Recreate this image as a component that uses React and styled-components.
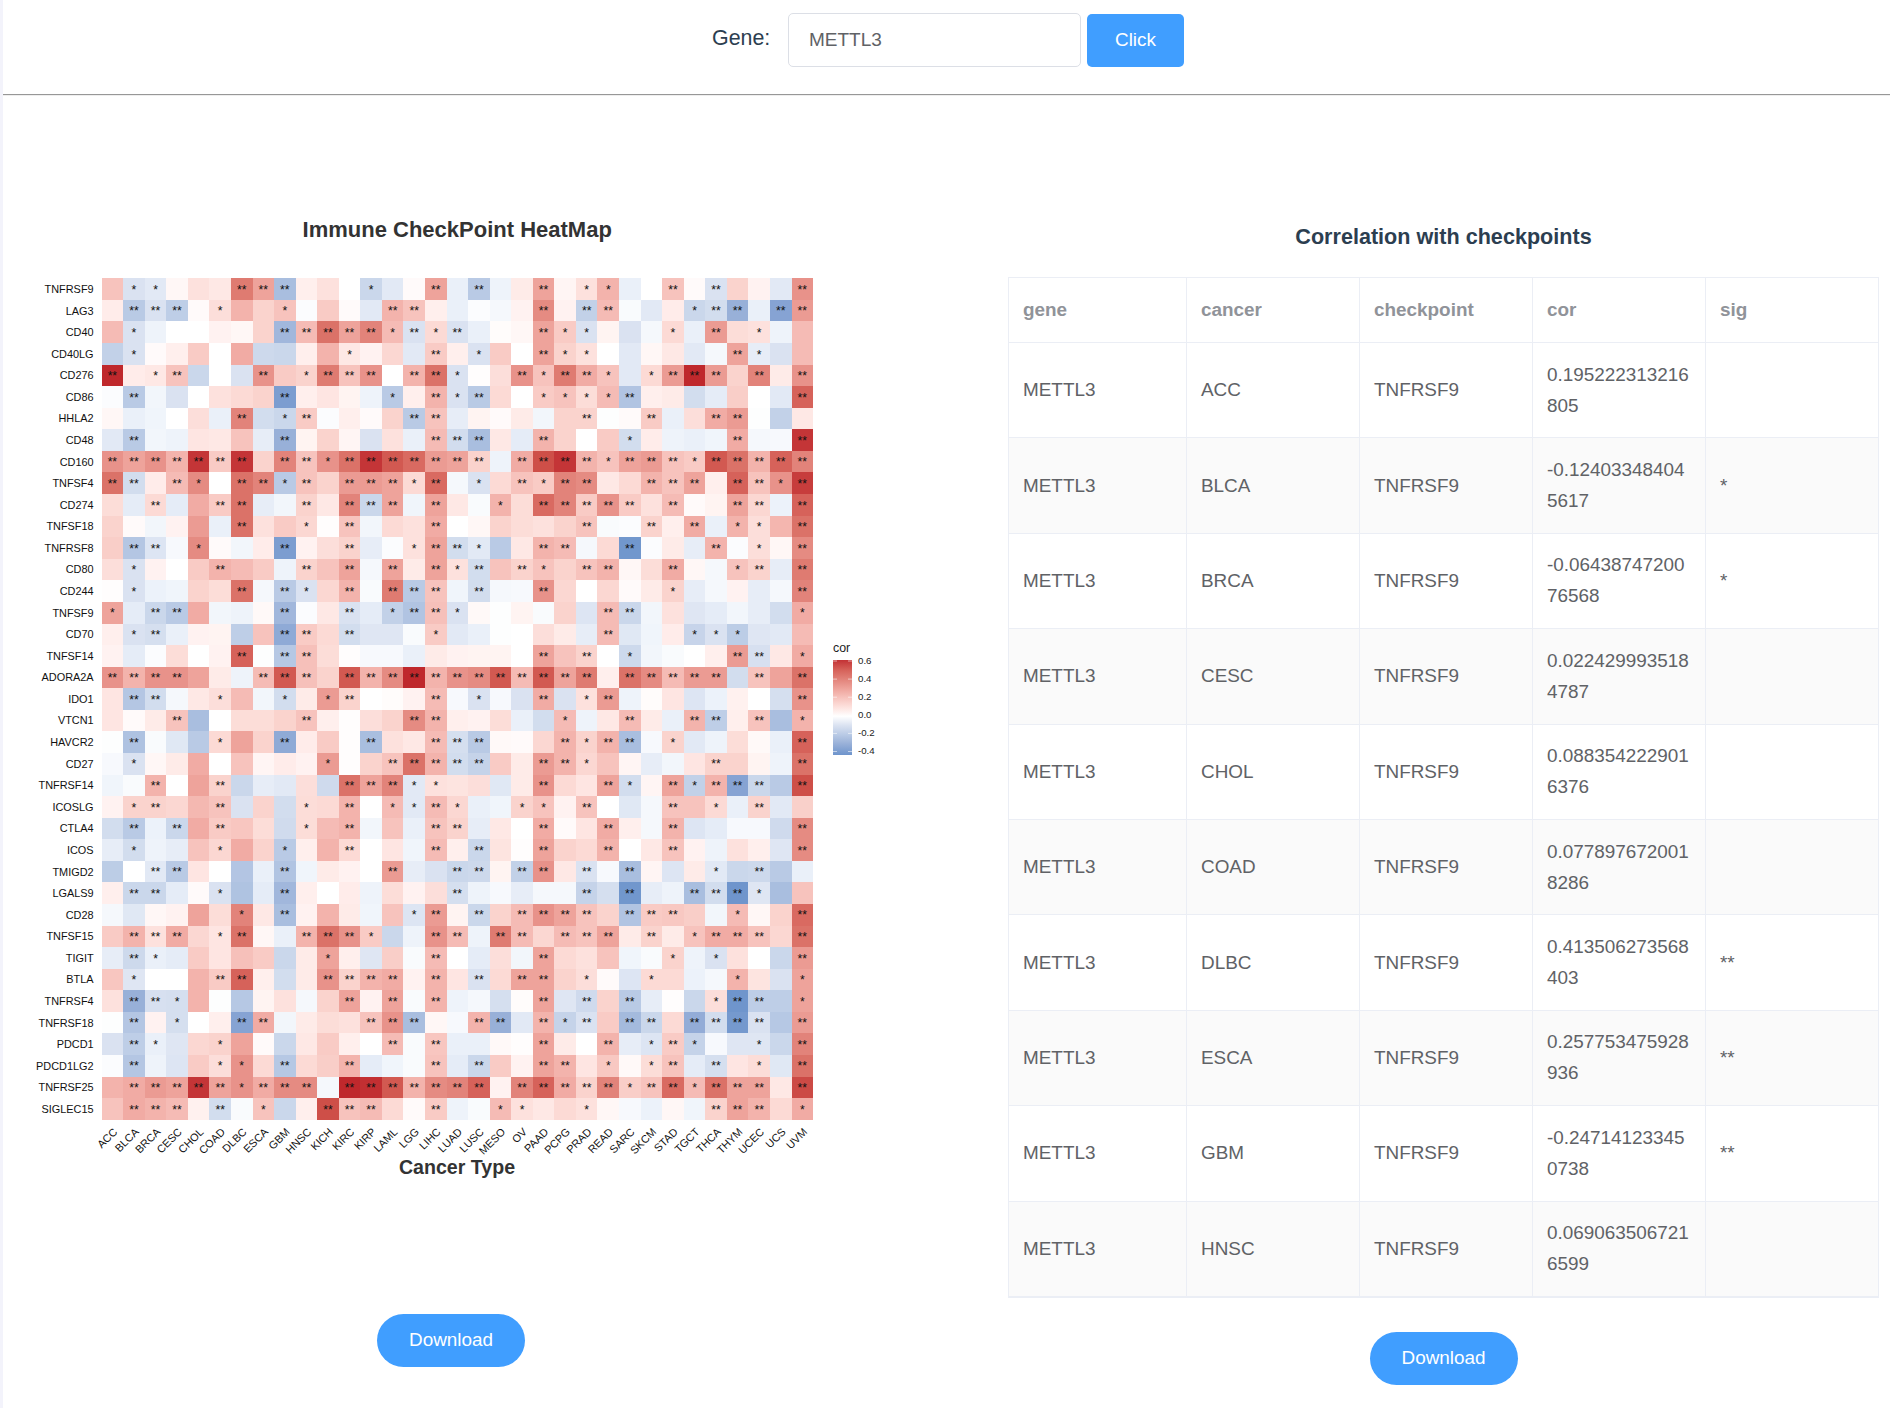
import React from "react";
import styled, { createGlobalStyle } from "styled-components";

const GlobalStyle = createGlobalStyle`
  * { box-sizing: border-box; }
  body {
    margin: 0;
    background: #fff;
    font-family: "Liberation Sans", Arial, Helvetica, sans-serif;
    color: #2c3e50;
    overflow: hidden;
  }
`;

const Page = styled.div`
  height: 1408px;
  border-left: 3px solid #f3f3fb;
  overflow: hidden;
`;

const Toolbar = styled.form`
  display: flex;
  align-items: flex-start;
  height: 95px;
  padding: 13px 0 0 709px;
  border-bottom: 1px solid #979797;
  box-shadow: 0 1px 0 #eee;
`;

const FieldLabel = styled.label`
  width: 76px;
  font-size: 21.4px;
  line-height: 51px;
`;

const GeneInput = styled.input`
  width: 293px;
  height: 54px;
  padding: 0 20px 1px;
  border: 1px solid #dcdfe6;
  border-radius: 5px;
  outline: none;
  font: 19px "Liberation Sans", Arial, sans-serif;
  color: #606266;
`;

const Button = styled.button`
  width: ${(p) => (p.$round ? "148px" : "97px")};
  height: 53px;
  margin: ${(p) => p.$margin};
  padding: 0 0 2px;
  border: 0;
  border-radius: ${(p) => (p.$round ? "27px" : "5px")};
  background: #409eff;
  color: #fff;
  font: 18.9px "Liberation Sans", Arial, sans-serif;
`;

const Content = styled.main`
  display: grid;
  grid-template-columns: 1005px 871px;
`;

const PlotPanel = styled.section`
  display: flex;
  flex-direction: column;
  align-items: flex-start;
  padding-top: 105px;
`;

const TablePanel = styled.section`
  display: flex;
  flex-direction: column;
  align-items: center;
  padding-top: 122px;
`;

const TableTitle = styled.h3`
  margin: 0;
  height: 60px;
  font-size: 21.6px;
  line-height: 40px;
`;

const Table = styled.table`
  width: 871px;
  height: 1021px;
  table-layout: fixed;
  border-collapse: separate;
  border-spacing: 0;
  border: 1px solid #ebeef5;
  border-right: 0;
  font-size: 18.9px;
  line-height: 31px;
  color: #606266;
`;

const HeadCell = styled.th`
  height: 65px;
  padding: 0 13px 2px 14px;
  border: solid #ebeef5;
  border-width: 0 1px 1px 0;
  text-align: left;
  color: #909399;
`;

const Row = styled.tr`
  background: ${(p) => (p.$striped ? "#fafafa" : "#fff")};
`;

const Cell = styled.td`
  height: 95.4px;
  padding: 0 13px 1px 14px;
  border: solid #ebeef5;
  border-width: 0 1px 1px 0;
  word-break: break-all;
`;

const Plot = styled.svg`
  display: block;
  font-family: "Liberation Sans", Arial, sans-serif;
`;

const AxisText = styled.text`
  font-size: 10.9px;
  fill: #111;
  text-anchor: end;
`;

const SigText = styled.text`
  font-size: 12.2px;
  fill: #111;
  text-anchor: middle;
`;

const PlotTitle = styled.text`
  font-size: ${(p) => p.$size}px;
  font-weight: bold;
  fill: #333;
  text-anchor: middle;
`;

const LegendText = styled.text`
  font-size: ${(p) => p.$size}px;
  fill: #222;
`;

const cancers =
  "ACC BLCA BRCA CESC CHOL COAD DLBC ESCA GBM HNSC KICH KIRC KIRP LAML LGG LIHC LUAD LUSC MESO OV PAAD PCPG PRAD READ SARC SKCM STAD TGCT THCA THYM UCEC UCS UVM".split(" ");

// One line per checkpoint; values are correlations in steps of 0.05, with their significance stars.
const heat = `
TNFRSF9 4 -2* -1.5* .5 2 1.5 8.5** 6** -5** 1 2 0 -3* -1.5 .3 6** -1 -4** -.8 1.3 6** .6 2* 5* -1 0 4** .3 -2** 3 .8 -1.5 7**
LAG3 1.2 -4** -2** -3.7** .3 2.2* 5 3 4* -.2 3.5 .3 -1.5 5** 4** 1 -1 -.2 -.5 .8 7.5** .8 -3.5** 4.5** -.3 -1.5 1.2 -3* -2.5** -6** -1 -7** 6.5**
CD40 4.5 -2* -.8 0 0 .8 .5 3 -5.5** 4.5** 9** 6** 8** 4.5* -2** 2.5* -2** -1 .2 .5 6** 3.5* -2* .7 -2 -.5 2.5* -1 6.5** 2.3 2* -.8 4.5
CD40LG -3.5 -2* .3 1 3.5 0 5.5 -2.8 -3 1 5 1.5* .8 2.7 -1.5 3.5** 1 -2* 3.5 0 6** 3* 2* 0 -1.5 .5 1.5 -1.5 -.5 6** -1.2* -2 4.5
CD276 13** 1.2 1.5* 4** -3 0 -2 7** 3.5 3* 8.5** 4** 7** 0 5** 9** -2* .1 2.2 7** 4* 8.5** 5.5** 4* -1.5 2.5* 6.5** 13** 6.5** 3 8** 1.3 7**
CD86 -.2 -4** -.6 -2 0 2 2.5 3 -7.5** 1 1.7 .7 -.8 -4* 1 5** -2* -4** 2.5 0 3.5* 4* 2.3* 4.5* -4.5** 1 1.3 -2.5 -1.3 3.3 0 -1.5 10**
HHLA2 .5 -1 -.7 0 2.2 -1 8** -2.5 -3* 3.5** -.2 1 .3 3 -4** 4** -1.2 .7 .3 1.3 -.6 3 3** -.1 .3 3.5** -1 2.2 5.5** 6.5** -.1 -3.5 1.5
CD48 -1.5 -4** -.6 -.8 1.7 1.5 4 -1.2 -6** .7 3 .6 -2 2 -1 4.5** -2.5** -5** 1.5 -1.3 5** 3 0 3.5 -2.5* 1.2 -.8 -1 -.7 5.5** -.5 -.4 12**
CD160 7** 6** 7** 5** 12** 3.5** 12** 3 8** 4** 7* 9** 12** 10.5** 9.5** 6.5** 6** 3** -.8 5.5** 11** 12** 5** 4* 6** 6.5** 4** 3.5* 10.5** 9** 5** 10** 8**
TNFSF4 9** -2.5** 1.2 4.5** 7.5* 0 9** 8** -4* 4** 3 6.5** 6.5** 6** 2.5* 9.5** -.5 -2* 2.5 4** 3.5* 8** 7.5** 1.5 2.5 5** 4** 6** 1 10** 4** 7* 11.7**
CD274 2.3 -1.3 2.5** -1.3 5.5 3.5** 9** -1.2 -.6 3** 1.5 8** -3** 6** -.7 6** 1.5 -.3 5* 2.3 9.5** 8** 3.5** 7** 3.5** 2 4.5** .3 .7 6** 2.7** -.9 10**
TNFSF18 3 .3 -.6 .8 6.5 -1 9** 2 3.5 2.7* .1 4** -.6 2.5 2 5.5** 0 .5 3 2.3 2 3 4** -.3 -.2 3** 1 5.5** -1 5* 2.2* 4.8 9**
TNFRSF8 3.3 -4.3** -1.8** -.4 7.5* .3 -.6 1.2 -7.5** .8 2.2 3** -1.2 -.2 2* 6** -2.5** -1.5* -4 1.5 5** 4.5** -.5 2.5 -8** -.2 1.3 -1.2 5** -.2 2.2* .5 7.5**
CD80 2.2 -2* .8 0 3.5 5** 4.5 3.5 -.8 3** 4 6** -.5 6** 1.3 6** 2* -2.5** 4 3** 4* 3 4** 5** .5 2.3 5.5** .5 -.5 4* 3** -1.2 8.5**
CD244 .1 -2* -.9 -.7 3 2.3 9** -.5 -4** -2* 2.7 5** -.3 8.5** -4** 4** -.7 -2.5** -.5 -.4 7** 2.7 0 2.7 .3 1.3 3* -1.2 -.5 .8 -1.2 -.5 8**
TNFSF9 6* -1.3 -3** -4** 5.5 -.6 -.8 .4 -5.5** -.2 1.5 -2** -1.3 -3.5* -4.5** 4.2** -2* .4 -.1 .7 -.3 3 -1.8 4.5** -3** -.6 2 -1.7 -1.3 -.6 -1.2 -2.5 5.5*
CD70 1 -2* -2.3** -1 .8 .7 -3.7 4 -6.5** 3.5** 2.5 -2.5** -1.7 -1.7 -.3 3.5* -1.5 -1 -.1 0 2.2 1.3 -1.2 4.5** -1.6 -.7 1.2 -3.2* -2* -3.8* -1.7 -1.5 4.5
TNFSF14 .8 -1.3 -.2 2.3 0 .8 10** -.1 -4.2** 4.2** 2.3 .1 -.4 -.4 -1 1.3 .8 .7 .7 0 6** 4 3** 0 -2.8* -.6 -.3 0 1 6.5** -2.2** 1.5 5.5*
ADORA2A 7** 5** 7** 7** 6 1.3 -.8 4.5** 10.5** 4.2** 3 10.5** 5** 7.5** 13** 5** 7** 7.5** 10.5** 4.5** 10.5** 6** 8.5** 1 9** 7.5** 4.5** 6.5** 6.5** -2.5 4** 6 9**
IDO1 1.7 -4.3** -2.5** -.5 1.5 2.2* 4.5 -.6 -2.5* 1.3 6.5* 3** 0 .2 .8 4.5** -.4 -2* -.4 -2 5.5** -2 2* 6.5** -.8 .2 1.7 -1.8 -.9 .9 0 -2.3 7**
VTCN1 1.7 .3 1.3 4** -5 0 2.3 2.3 3 4** 1 .1 2.2 3 7.5** 5** 1 .8 2.3 -1 -2.5 4.5* -.8 1.5 4.5** 1.3 -1 5** -3.7** 1 4** -5 5*
HAVCR2 -.1 -4.7** -.3 -1.6 -4 2.5* 6 3 -6.5** 1.2 3.5 .1 -5** 2 1.5 4.5** -2.3** -4** .4 .3 2.7 5** 3* 5** -5** -.4 3* -1.5 -.8 2.3 .4 -1 10**
CD27 -.4 -2* .5 1.3 5.5 0 4 .6 1.2 .8 6.5* .1 3 4** 9** 5** -2.5** -3.3** 3.5 1.3 6.5** 5** 2.7* 4 .6 -1.2 -.6 1.7 3** 3 .7 -.8 9**
TNFRSF14 -.7 -.3 5** 0 6 3** -3 -1.2 -1.5 2.2 -2.7 9** 6** 8** -1.5* 2* 1.8 2.2 -1.6 1.3 7** 2.5 1.7 6** -2.5* .6 6** -3.5* 5** -7** -3** -4 11**
ICOSLG .8 3* 3** 2.7 4.7 4** -2 3 -2.5 2.3* 2.5 5** 0 4.5* -1.5* 4.5** 2.7* -1 -.7 3* 4* .8 4** 0 -1.6 -.5 4** 4 2.5* -1 3** -1.5 3.2
CTLA4 -2.5 -4** -.9 -3** 5.5 3.5** 3.8 2.3 -2.6 2.3* 4.5 5** -.6 4 -1 4** 3** -1.2 1.5 0 5.5** .3 1.7 5.5** 1 -.5 5** -1.8 -1.3 -.4 -.4 -2.7 7.5**
ICOS -1.2 -2.5* -.8 -1.2 4 2.7* 5.5 3 -4* 1 5 2.5** 0 1.7 -.7 4.5** 1 -3** 1.8 .1 6** 3 2.5 5** 0 1.5 4** .8 -.8 2 1 -1.7 7.5**
TMIGD2 -3.8 0 -1.5** -4** 1.7 0 -4.4 -1 -4.5** -.7 1.3 .8 0 6.5** -1.2 -2 -3** -2.8** .7 -3.5** 7** 1.5 -2** -.4 -5** .6 -1.8 1.3 -1.5* -3 -2.8** -4 -1
LGALS9 1 -3** -3** -1.3 .3 -2* -4.6 -1.3 -5.5** 1 0 1.2 -.8 2.3 .8 2.2 -2.3** -.8 -.4 -1.2 -.5 -.5 -3.3** -2.3 -8** -1.2 -.8 -5** -2.5** -8.3** -1.7* -5 4
CD28 -.5 -1.6 .5 .8 6 2.3 8* 1.5 -5** .8 5 1.3 -.7 4 -1.8* 6.5** .7 -3** 3 4.5** 7** 6** 4** 3 -4.5** 3.5** 3.7** 3.3 -.6 4.5* .5 3 9.5**
TNFSF15 3.5 5** 2** 5.5** 2.7 1.7* 9** .5 -1 5** 9** 7** 3.5* -3 -.8 7** 4.5** -.8 8.5** 4.5** 2.7 4.5** 4** 6** 1.3 3** 1.3 4* 5.5** 5.5** 4** 2.7 9**
TIGIT -1.2 -2.8** -1* -1.3 3.5 1.7 4.2 3.5 -3 1.3 6* 1 -1.7 3.3 -.3 4.5** 0 -1.3 2.2 -.6 6** 2.5 2 4 -.7 -.3 3* -.8 -2* 2 0 -3 6.5**
BTLA 3.8 -1.7* 0 0 5 3.5** 10** 1 -2.5 1.3 7** 3** 5** 5.5** .8 5** 1.7 -2** 2.5 6** 6** 3 2.2* .3 -1.8 2.5* 2.5 -.9 -.5 5* 1.8 -2 6*
TNFRSF4 2 -6** -2.2** -2.3* 5 -.1 -4.2 .7 2 -.5 3 6** .8 6** -.3 5** -.8 -.5 -2.3 .2 6** -1.7 -2.7** 3 -4** -1.2 .1 -3 2.2* -8.3** -3.7** -3.7 6*
TNFRSF18 -.1 -4.3** .8 -2.3* 0 1 -7** 5.5** -.6 1.3 2.3 2 4** 7** -5** .5 -.4 5** -6** -1.5 5** -3.3* -2** 3.5 -5.3** -3** 2.5 -6.3** -2.5** -7.8** -2** -4.2 6.5**
PDCD1 -2 -3.7** -1* -1.7 2.7 3* 6 .3 -3 1.5 3.5 1 0 4.5** -.3 3.8** -1 -1 .4 .1 6** 1.3 0 5** -1.2 -1.8* 3.5** -3.3* -.4 -1.7 -1.7* -3 8**
PDCD1LG2 -.2 -4.3** -.8 -1.8 3.5 2.2* 7* 2.5 -4.2** 2.5 3.3 5** -1.3 -.7 -.3 4** -1.3 -3** 3.5 .8 6** 5** 1.7 3.7* .4 2.3* 4** -1.3 -2.3** 1.7 2.3* -1.6 9**
TNFRSF25 5 5.5** 6.5** 6** 12** 6** 7* 5.5** 7.5** 7.5** -.5 13** 12.5** 10.5** 5** 7.5** 8** 10** .8 8** 10** 5.5** 3** 8** 3.3* 4** 9.5** 4.5* 9** 6** 6** 1.5 11.2**
SIGLEC15 4 5.5** 5** 4.5** .9 -2.5** -.3 4* -3 1 11** 4** 4.5** 2.5 .3 3.5** -.8 -.3 4.5* 2* 1.5 2.5 2* .5 -.4 -.9 .5 -.7 3** 6** 5** 2.5 5.5*
`
  .trim()
  .split("\n")
  .map((line) => {
    const [name, ...cells] = line.split(" ");
    return {
      name,
      cells: cells.map((c) => ({ value: parseFloat(c), sig: c.replace(/[^*]/g, "") })),
    };
  });

const reds = ["ffffff", "ffefed", "fde1dd", "fad3cd", "f7c3bd", "f3b3ac", "eea39b", "e8928a", "e2837a", "db7268", "d6625a", "ce4f48", "c43537", "bf282c"];
const blues = ["ffffff", "eaf0f9", "dae2f1", "cad7eb", "b9cae5", "a9bedf", "98b0d8", "86a3d3", "7197cd", "6990ca"];

function colorFor(value) {
  const ramp = value < 0 ? blues : reds;
  const v = Math.min(Math.abs(value), ramp.length - 1);
  const i = Math.min(Math.floor(v), ramp.length - 2);
  const t = v - i;
  const channel = (hex, k) => parseInt(hex.slice(k * 2, k * 2 + 2), 16);
  const mix = [0, 1, 2].map((k) =>
    Math.round(channel(ramp[i], k) * (1 - t) + channel(ramp[i + 1], k) * t)
  );
  return `rgb(${mix.join(",")})`;
}

const X0 = 101.6;
const Y0 = 278.3;
const CW = 21.56;
const CH = 21.575;

const legendTicks = ["0.6", "0.4", "0.2", "0.0", "-0.2", "-0.4"];
const legendStops = [12.2, 10, 8, 6, 4, 2, 0, -2, -4, -6, -8.4];

function HeatMap() {
  return (
    <Plot width="897" height="1000" viewBox="3 200 897 1000">
      <defs>
        <linearGradient id="cor-scale" x1="0" y1="0" x2="0" y2="1">
          {legendStops.map((s) => (
            <stop key={s} offset={(12.2 - s) / 20.6} stopColor={colorFor(s)} />
          ))}
        </linearGradient>
      </defs>
      <PlotTitle $size={22} x="457.2" y="237">Immune CheckPoint HeatMap</PlotTitle>
      {heat.map((row, r) => (
        <g key={row.name + r}>
          <AxisText x="93.6" y={Y0 + CH * (r + 0.5) + 3.9}>{row.name}</AxisText>
          {row.cells.map((cell, c) => (
            <rect
              key={c}
              x={X0 + CW * c}
              y={Y0 + CH * r}
              width={CW + 0.1}
              height={CH + 0.1}
              fill={colorFor(cell.value)}
              shapeRendering="crispEdges"
            />
          ))}
          {row.cells.map((cell, c) =>
            cell.sig ? (
              <SigText key={c} x={X0 + CW * (c + 0.5)} y={Y0 + CH * (r + 0.5) + 4.7}>
                {cell.sig}
              </SigText>
            ) : null
          )}
        </g>
      ))}
      {cancers.map((name, c) => (
        <AxisText key={name} transform={`translate(${X0 + CW * (c + 0.5) + 5.6} 1132.6) rotate(-45)`}>
          {name}
        </AxisText>
      ))}
      <PlotTitle $size={19.6} x="457" y="1174">Cancer Type</PlotTitle>
      <LegendText $size={12.4} x="833" y="652.3">cor</LegendText>
      <rect x="833" y="660" width="19" height="95" fill="url(#cor-scale)" />
      {legendTicks.map((label, i) => (
        <g key={label}>
          <path
            d={`M833 ${661 + i * 18.1}h4M848 ${661 + i * 18.1}h4`}
            stroke="#fff"
            strokeWidth="0.8"
            strokeOpacity="0.7"
          />
          <LegendText $size={9.7} x="858" y={663.8 + i * 18.1}>{label}</LegendText>
        </g>
      ))}
    </Plot>
  );
}

const columns = ["gene", "cancer", "checkpoint", "cor", "sig"];
const rows = [
  ["ACC", "0.195222313216805", ""],
  ["BLCA", "-0.124033484045617", "*"],
  ["BRCA", "-0.0643874720076568", "*"],
  ["CESC", "0.0224299935184787", ""],
  ["CHOL", "0.0883542229016376", ""],
  ["COAD", "0.0778976720018286", ""],
  ["DLBC", "0.413506273568403", "**"],
  ["ESCA", "0.257753475928936", "**"],
  ["GBM", "-0.247141233450738", "**"],
  ["HNSC", "0.0690635067216599", ""],
];

export default function App() {
  return (
    <>
      <GlobalStyle />
      <Page>
        <Toolbar onSubmit={(e) => e.preventDefault()}>
          <FieldLabel htmlFor="gene">Gene:</FieldLabel>
          <GeneInput id="gene" defaultValue="METTL3" />
          <Button $margin="1px 0 0 6px">Click</Button>
        </Toolbar>
        <Content>
          <PlotPanel>
            <HeatMap />
            <Button $round $margin="114px 0 0 374px">Download</Button>
          </PlotPanel>
          <TablePanel>
            <TableTitle>Correlation with checkpoints</TableTitle>
            <Table>
              <colgroup>
                <col style={{ width: 178 }} />
                <col />
                <col />
                <col />
                <col />
              </colgroup>
              <thead>
                <tr>
                  {columns.map((name) => (
                    <HeadCell key={name}>{name}</HeadCell>
                  ))}
                </tr>
              </thead>
              <tbody>
                {rows.map(([cancer, cor, sig], i) => (
                  <Row key={cancer} $striped={i % 2 === 1}>
                    <Cell>METTL3</Cell>
                    <Cell>{cancer}</Cell>
                    <Cell>TNFRSF9</Cell>
                    <Cell>{cor}</Cell>
                    <Cell>{sig}</Cell>
                  </Row>
                ))}
              </tbody>
            </Table>
            <Button $round $margin="34px 0 0">Download</Button>
          </TablePanel>
        </Content>
      </Page>
    </>
  );
}
